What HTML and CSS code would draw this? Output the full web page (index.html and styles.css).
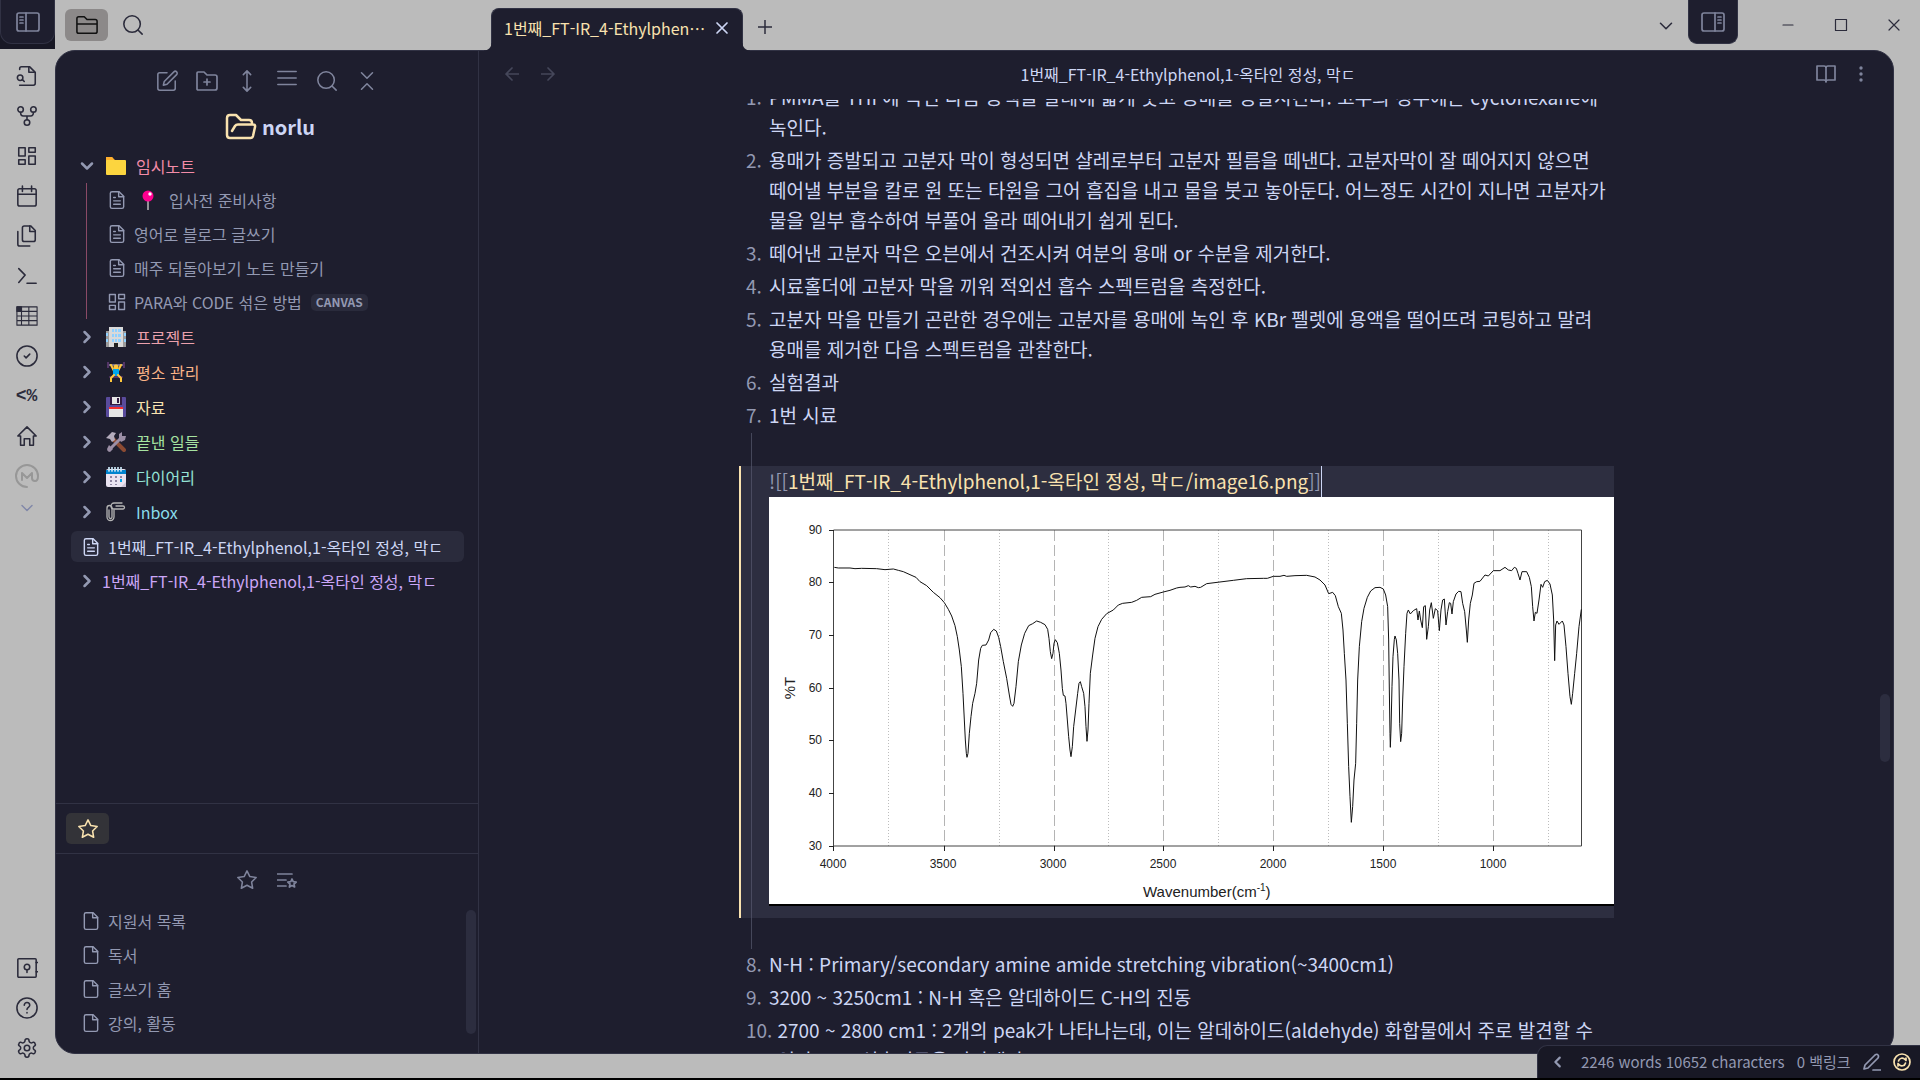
FILE: index.html
```html
<!DOCTYPE html>
<html lang="ko">
<head>
<meta charset="utf-8">
<title>1번째_FT-IR_4-Ethylphenol,1-옥타인 정성, 막ㄷ</title>
<link rel="stylesheet" href="styles.css">
</head>
<body>
<svg class="defs" width="0" height="0" aria-hidden="true">
  <symbol id="search" viewBox="0 0 24 24"><circle cx="11" cy="11" r="9"/><path d="M22 22l-4.300-4.300"/></symbol>
  <symbol id="chev-down" viewBox="0 0 24 24"><path d="M6 9l6 6 6-6"/></symbol>
  <symbol id="chev-right" viewBox="0 0 24 24"><path d="M9 6l6 6-6 6"/></symbol>
  <symbol id="file" viewBox="0 0 24 24"><path d="M14.500 2H6a2 2 0 0 0-2 2v16a2 2 0 0 0 2 2h12a2 2 0 0 0 2-2V7.500z"/><path d="M14 2v6h6"/></symbol>
  <symbol id="file-text" viewBox="0 0 24 24"><path d="M14.500 2H6a2 2 0 0 0-2 2v16a2 2 0 0 0 2 2h12a2 2 0 0 0 2-2V7.500z"/><path d="M14 2v6h6M16 13H8M16 17H8M10 9H8"/></symbol>
  <symbol id="dash" viewBox="0 0 24 24"><path d="M3 3h7v9H3zM14 3h7v5h-7zM14 12h7v9h-7zM3 16h7v5H3z"/></symbol>
  <symbol id="star" viewBox="0 0 24 24"><path d="M12 2l3.090 6.260L22 9.270l-5 4.870 1.180 6.880L12 17.770l-6.180 3.250L7 14.140 2 9.270l6.910-1.010z"/></symbol>
</svg>

<div class="app">
  <nav class="ribbon" aria-label="리본">
    <div class="ribbon-head"><button class="side-toggle" aria-label="사이드바 접기"><svg class="i24" viewBox="0 0 24 24"><rect x="1" y="3" width="22" height="18" rx="2"/><path d="M10 3v18M4 7h3M4 10h3M4 13h3"/></svg></button></div>
    <div class="ribbon-list">
      <button aria-label="빠른 전환"><svg class="i22" viewBox="0 0 24 24"><path d="M4 5V4a2 2 0 0 1 2-2h9l6 6v12a2 2 0 0 1-2 2H4"/><path d="M14 2v6h6"/><circle cx="4.500" cy="14" r="3"/><path d="M9 18l-2-2"/></svg></button>
      <button aria-label="그래프 뷰"><svg class="i22" viewBox="0 0 24 24"><circle cx="12" cy="19" r="3"/><circle cx="5" cy="5" r="3"/><circle cx="19" cy="5" r="3"/><path d="M19 8c0 3-1 4-3 4H8c-2 0-3-1-3-4M12 12v4"/></svg></button>
      <button aria-label="캔버스"><svg class="i22"><use href="#dash"/></svg></button>
      <button aria-label="데일리 노트"><svg class="i22" viewBox="0 0 24 24"><rect x="2" y="4" width="20" height="19" rx="2"/><path d="M7 1v6M17 1v6M2 10h20"/></svg></button>
      <button aria-label="템플릿"><svg class="i22" viewBox="0 0 24 24"><path d="M16 1H9a2 2 0 0 0-2 2v13a2 2 0 0 0 2 2h10a2 2 0 0 0 2-2V6z"/><path d="M15 1v6h6M2 7v14a2 2 0 0 0 2 2h11"/></svg></button>
      <button aria-label="명령어"><svg class="i22" viewBox="0 0 24 24"><path d="M3 4l7 7-7 8M12 20h10"/></svg></button>
      <button aria-label="표"><svg class="i22 thin" viewBox="0 0 24 24"><path d="M1 2h22v20H1zM1 7h22M1 12h22M1 17h22M6 2v20M14 2v20"/><path d="M1 2h5v5H1z" fill="currentColor"/></svg></button>
      <button aria-label="할 일"><svg class="i22" viewBox="0 0 24 24"><circle cx="12" cy="12" r="11"/><path d="M9 12l2 2 4-4"/></svg></button>
      <button class="code" aria-label="템플레이터">&lt;%</button>
      <button aria-label="홈"><svg class="i22" viewBox="0 0 24 24"><path d="M2 12L12 2l10 10h-3v10h-4v-7H9v7H5V12z"/></svg></button>
      <button class="faint" aria-label="메모"><svg class="i24" viewBox="0 0 24 24"><path d="M12 23A11 11 0 1 1 23 12c0 3-1 5-3 5s-3-1-3-3V9l-5 5-5-5v7"/></svg></button>
      <button class="more" aria-label="더 보기"><svg class="i20"><use href="#chev-down"/></svg></button>
    </div>
    <div class="ribbon-foot">
      <button aria-label="보관함"><svg class="i22" viewBox="0 0 24 24"><rect x="2" y="2" width="20" height="20" rx="1"/><circle cx="12" cy="11" r="3"/><path d="M12 14v3M22 6h2M22 16h2"/></svg></button>
      <button aria-label="도움말"><svg class="i22" viewBox="0 0 24 24"><circle cx="12" cy="12" r="11"/><path d="M9 9a3 3 0 0 1 6 0c0 2-3 2.500-3 4.500M12 17v.5"/></svg></button>
      <button aria-label="설정"><svg class="i22" viewBox="0 0 24 24"><path d="M12.200 2h-.4a2 2 0 0 0-2 2v.2a2 2 0 0 1-1 1.700l-.5.300a2 2 0 0 1-2 0l-.1-.1a2 2 0 0 0-2.800.7l-.2.400a2 2 0 0 0 .7 2.700l.2.100a2 2 0 0 1 1 1.700v.6a2 2 0 0 1-1 1.700l-.2.100a2 2 0 0 0-.7 2.700l.2.400a2 2 0 0 0 2.800.7l.1-.1a2 2 0 0 1 2 0l.5.300a2 2 0 0 1 1 1.700v.2a2 2 0 0 0 2 2h.4a2 2 0 0 0 2-2v-.2a2 2 0 0 1 1-1.700l.5-.3a2 2 0 0 1 2 0l.1.100a2 2 0 0 0 2.800-.7l.2-.4a2 2 0 0 0-.7-2.700l-.2-.1a2 2 0 0 1-1-1.700v-.6a2 2 0 0 1 1-1.700l.2-.1a2 2 0 0 0 .7-2.700l-.2-.4a2 2 0 0 0-2.800-.7l-.1.100a2 2 0 0 1-2 0l-.5-.3a2 2 0 0 1-1-1.700V4a2 2 0 0 0-2-2z"/><circle cx="12" cy="12" r="3"/></svg></button>
    </div>
  </nav>

  <div class="main">
    <header class="titlebar">
      <div class="side-tabs">
        <button class="pane-tab active" aria-label="파일 탐색기"><svg class="i22" viewBox="0 0 24 24"><path d="M3 3h6l3 3h9a2 2 0 0 1 2 2v11a2 2 0 0 1-2 2H3a2 2 0 0 1-2-2V5a2 2 0 0 1 2-2zM1 11h22"/></svg></button>
        <button class="pane-tab" aria-label="검색"><svg class="i22"><use href="#search"/></svg></button>
      </div>
      <div class="doc-tab"><span>1번째_FT-IR_4-Ethylphen⋯</span><button aria-label="탭 닫기"><svg class="i14" viewBox="0 0 14 14"><path d="M2 2l10 10M12 2L2 12"/></svg></button></div>
      <button class="new-tab" aria-label="새 탭"><svg class="i16" viewBox="0 0 16 16"><path d="M8 0v16M0 8h16"/></svg></button>
      <button class="tab-list" aria-label="탭 목록"><svg class="i22"><use href="#chev-down"/></svg></button>
      <button class="right-toggle" aria-label="오른쪽 사이드바"><svg class="i24" viewBox="0 0 24 24"><rect x="1" y="3" width="22" height="18" rx="2"/><path d="M14 3v18M17 7h3M17 10h3M17 13h3"/></svg></button>
      <div class="win-buttons">
        <button aria-label="최소화"><svg class="i14" viewBox="0 0 14 14"><path d="M2 7h10"/></svg></button>
        <button aria-label="최대화"><svg class="i14" viewBox="0 0 14 14"><path d="M1.500 1.500h11v11h-11z"/></svg></button>
        <button aria-label="닫기"><svg class="i14" viewBox="0 0 14 14"><path d="M2 2l10 10M12 2L2 12"/></svg></button>
      </div>
    </header>

    <div class="workspace">
      <aside class="sidebar">
        <div class="toolbar">
          <button aria-label="새 노트"><svg class="i22" viewBox="0 0 24 24"><path d="M12 3H4a2 2 0 0 0-2 2v15a2 2 0 0 0 2 2h15a2 2 0 0 0 2-2v-8"/><path d="M19.500 2a2 2 0 0 1 3 3L12 15.500l-4 1 1-4z"/></svg></button>
          <button aria-label="새 폴더"><svg class="i24" viewBox="0 0 24 24"><path d="M3 3h6l3 3h8a2 2 0 0 1 2 2v11a2 2 0 0 1-2 2H3a1 1 0 0 1-1-1V4a1 1 0 0 1 1-1zM12 10v6M9 13h6"/></svg></button>
          <button aria-label="정렬"><svg class="i22" viewBox="0 0 24 24"><path d="M12 1v22M8 5l4-4 4 4M8 19l4 4 4-4"/></svg></button>
          <button class="raised" aria-label="목록"><svg class="i22" viewBox="0 0 24 24"><path d="M2 5h20M2 12h20M2 19h20"/></svg></button>
          <button aria-label="검색"><svg class="i22"><use href="#search"/></svg></button>
          <button aria-label="모두 접기"><svg class="i22" viewBox="0 0 24 24"><path d="M6 3l6 6 6-6M6 21l6-6 6 6"/></svg></button>
        </div>
        <div class="vault"><svg viewBox="0 0 32 28"><path d="M7 18l3-5q1-1.500 3-1.500h15q2.500 0 2 2.500l-2 9q-.5 2-2.500 2H5q-3 0-3-3V5q0-3 3-3h6l5 5h8q3 0 3 3v1.500"/></svg><h1>norlu</h1></div>

        <ul class="tree">
          <li><a class="row folder" href="#"><svg class="chev"><use href="#chev-down"/></svg><svg class="emoji" viewBox="0 0 20 20"><path d="M0 1h6l3 3h9v6H0z" fill="#ffb02e"/><rect y="4" width="20" height="15" rx="1" fill="#fcd53f"/><path d="M0 1h6l2 3H0z" fill="#ffb02e"/></svg><span class="c-red">임시노트</span></a>
            <ul class="children">
              <li><a class="row" href="#"><svg class="fi"><use href="#file-text"/></svg><svg class="emoji pin" viewBox="0 0 20 20"><path d="M10 9v11" stroke="#bbb" stroke-width="1.500"/><circle cx="10" cy="6" r="5.500" fill="#ff0090"/><circle cx="12" cy="4" r="1.700" fill="#fff"/></svg><span>입사전 준비사항</span></a></li>
              <li><a class="row" href="#"><svg class="fi"><use href="#file-text"/></svg><span>영어로 블로그 글쓰기</span></a></li>
              <li><a class="row" href="#"><svg class="fi"><use href="#file-text"/></svg><span>매주 되돌아보기 노트 만들기</span></a></li>
              <li><a class="row" href="#"><svg class="fi"><use href="#dash"/></svg><span>PARA와 CODE 섞은 방법</span><b class="tag">CANVAS</b></a></li>
            </ul>
          </li>
          <li><a class="row folder" href="#"><svg class="chev"><use href="#chev-right"/></svg><svg class="emoji" viewBox="0 0 20 20"><path d="M0 4h20v16H0z" fill="#9b9b9b"/><path d="M3 0h14v20H3z" fill="#d9d9d9"/><path d="M6 2h2v3H6zM9 2h2v3H9zM12 2h3v3h-3zM6 7h2v3H6zM9 7h2v3H9zM12 7h3v3h-3zM6 12h2v3H6zM9 12h2v3H9zM12 12h3v3h-3zM0 6h2v3H0zM18 6h2v3h-2zM0 12h2v3H0zM18 12h2v3h-2z" fill="#8fd0ff"/><path d="M8 16h4v4H8z" fill="#222"/></svg><span class="c-maroon">프로젝트</span></a></li>
          <li><a class="row folder" href="#"><svg class="chev"><use href="#chev-right"/></svg><svg class="emoji" viewBox="0 0 20 20"><path d="M2 3h16" stroke="#998ea4"/><path d="M1 0h2v6H1zM17 0h2v6h-2z" fill="#533566"/><path d="M5 3l3 6M15 3l-3 6" stroke="#ffc83d" stroke-width="2"/><circle cx="10" cy="5" r="2.500" fill="#ffc83d"/><path d="M7 7h6v7H7z" fill="#00a6ed"/><path d="M4 15h12" stroke="#533566" stroke-width="2"/><path d="M8 13l-3 3v4M12 13l3 3v4" stroke="#ffc83d" stroke-width="2" fill="none"/></svg><span class="c-peach">평소 관리</span></a></li>
          <li><a class="row folder" href="#"><svg class="chev"><use href="#chev-right"/></svg><svg class="emoji" viewBox="0 0 20 20"><rect width="20" height="20" rx="1" fill="#594b9c"/><path d="M4 0h12v8H4z" fill="#321b41"/><path d="M6 0h8v7H6z" fill="#e6e6e6"/><path d="M11 1h2v5h-2z" fill="#321b41"/><path d="M3 10h14v10H3z" fill="#e6e6e6"/><path d="M3 10h14v2H3z" fill="#f8312f"/></svg><span class="c-yellow">자료</span></a></li>
          <li><a class="row folder" href="#"><svg class="chev"><use href="#chev-right"/></svg><svg class="emoji" viewBox="0 0 20 20"><path d="M7 7l11 11" stroke="#8a4a32" stroke-width="4"/><path d="M3 18L15 6" stroke="#9b8ea5" stroke-width="3"/><path d="M13 7V2l3-2v4h4l-1 4-4 2zM1 17l2-4 4 4-3 3-2-1z" fill="#9b8ea5"/><path d="M0 6l6-6 4 1-2 3 1 4-3 2-2-3z" fill="#b4acbc"/></svg><span class="c-green">끝낸 일들</span></a></li>
          <li><a class="row folder" href="#"><svg class="chev"><use href="#chev-right"/></svg><svg class="emoji" viewBox="0 0 20 20"><rect y="2" width="20" height="18" rx="2" fill="#e9e3f0"/><path d="M0 3h20v4H0z" fill="#0084ce"/><path d="M3 0v4M6 0v4M9 0v4M12 0v4M15 0v4" stroke="#c8e4f5"/><path d="M4 9h2v2H4zM9 9h2v2H9zM14 9h2v2h-2zM4 13h2v2H4zM9 13h2v2H9zM4 17h2v1H4zM9 17h2v1H9z" fill="#8d84a0"/><path d="M14 12h2v3h-2z" fill="#00a6ed"/><path d="M20 15v5h-5z" fill="#cdc4d6"/></svg><span class="c-teal">다이어리</span></a></li>
          <li><a class="row folder" href="#"><svg class="chev"><use href="#chev-right"/></svg><svg class="emoji" viewBox="0 0 20 20"><g fill="none" stroke="#b5b5b5" stroke-width="1.300"><path d="M3 8v7a1.500 1.500 0 0 0 3 0V6a2 2 0 0 0-5 0v9a3.500 3.500 0 0 0 7 0V8"/><path d="M10 4h7a1.500 1.500 0 0 1 0 3H8a2.500 2.500 0 0 1 0-6h8"/></g></svg><span class="c-sky">Inbox</span></a></li>
          <li><a class="row top current" href="#"><svg class="fi"><use href="#file-text"/></svg><span>1번째_FT-IR_4-Ethylphenol,1-옥타인 정성, 막ㄷ</span></a></li>
          <li><a class="row folder bare" href="#"><svg class="chev"><use href="#chev-right"/></svg><span class="c-mauve">1번째_FT-IR_4-Ethylphenol,1-옥타인 정성, 막ㄷ</span></a></li>
        </ul>

        <section class="starred">
          <div class="starred-tabs"><button aria-label="별표"><svg class="i22"><use href="#star"/></svg></button></div>
          <div class="toolbar small">
            <button aria-label="별표 추가"><svg class="i22"><use href="#star"/></svg></button>
            <button aria-label="별표 그룹"><svg class="i20" viewBox="0 0 20 20"><path d="M0 4h15M0 10h9M0 16h9"/><path d="M15 9l1.200 2.700 3 .3-2.200 2 .6 3-2.600-1.500-2.600 1.500.6-3-2.200-2 3-.3z"/></svg></button>
          </div>
          <ul class="starred-list">
            <li><a class="row" href="#"><svg class="fi"><use href="#file"/></svg><span>지원서 목록</span></a></li>
            <li><a class="row" href="#"><svg class="fi"><use href="#file"/></svg><span>독서</span></a></li>
            <li><a class="row" href="#"><svg class="fi"><use href="#file"/></svg><span>글쓰기 홈</span></a></li>
            <li><a class="row" href="#"><svg class="fi"><use href="#file"/></svg><span>강의, 활동</span></a></li>
          </ul>
          <div class="thumb"></div>
        </section>
      </aside>

      <main class="editor">
        <div class="view-header">
          <div class="nav"><button aria-label="뒤로"><svg class="i14" viewBox="0 0 14 14"><path d="M14 7H1M7 1L1 7l6 6"/></svg></button><button aria-label="앞으로"><svg class="i14" viewBox="0 0 14 14"><path d="M0 7h13M7 1l6 6-6 6"/></svg></button></div>
          <h2>1번째_FT-IR_4-Ethylphenol,1-옥타인 정성, 막ㄷ</h2>
          <div class="actions"><button aria-label="읽기 모드"><svg class="i20" viewBox="0 0 20 20"><path d="M10 4q0-2-2-2H1v14h7q2 0 2 2 0-2 2-2h7V2h-7q-2 0-2 2v14"/></svg></button><button aria-label="더 보기"><svg class="i20" viewBox="0 0 20 20"><g fill="currentColor" stroke="none"><circle cx="10" cy="4" r="1.700"/><circle cx="10" cy="10" r="1.700"/><circle cx="10" cy="16" r="1.700"/></g></svg></button></div>
        </div>
        <div class="scroller">
          <article class="note">
            <ol>
              <li><span class="n">1.</span><p>PMMA를 THF에 녹인 다음 용액을 샬레에 얇게 붓고 용매를 증발시킨다. 고무의 경우에는 cyclohexane에<br>녹인다.</p></li>
              <li><span class="n">2.</span><p>용매가 증발되고 고분자 막이 형성되면 샬레로부터 고분자 필름을 떼낸다. 고분자막이 잘 떼어지지 않으면<br>떼어낼 부분을 칼로 원 또는 타원을 그어 흠집을 내고 물을 붓고 놓아둔다. 어느정도 시간이 지나면 고분자가<br>물을 일부 흡수하여 부풀어 올라 떼어내기 쉽게 된다.</p></li>
              <li><span class="n">3.</span><p>떼어낸 고분자 막은 오븐에서 건조시켜 여분의 용매 or 수분을 제거한다.</p></li>
              <li><span class="n">4.</span><p>시료홀더에 고분자 막을 끼워 적외선 흡수 스펙트럼을 측정한다.</p></li>
              <li><span class="n">5.</span><p>고분자 막을 만들기 곤란한 경우에는 고분자를 용매에 녹인 후 KBr 펠렛에 용액을 떨어뜨려 코팅하고 말려<br>용매를 제거한 다음 스펙트럼을 관찰한다.</p></li>
              <li><span class="n">6.</span><p>실험결과</p></li>
              <li><span class="n">7.</span><p>1번 시료</p></li>
            </ol>
            <div class="indent">
              <div class="embed">
                <p class="link"><i>![[</i>1번째_FT-IR_4-Ethylphenol,1-옥타인 정성, 막ㄷ/image16.png<i>]]</i><span class="caret"></span></p>
                <svg class="chart" viewBox="0 0 845 409" role="img" aria-label="FT-IR 스펙트럼">
                  <rect width="845" height="407" fill="#fff" stroke="none"/><rect y="407" width="845" height="2" fill="#000" stroke="none"/>
                  <g stroke="#b4b4b4" stroke-dasharray="11 4"><path d="M175.500 33v316M285.500 33v316M394.500 33v316M504.500 33v316M614.500 33v316M724.500 33v316"/></g>
                  <g stroke="#bdbdbd" stroke-dasharray="1 2"><path d="M119.500 33v316M230.500 33v316M339.500 33v316M449.500 33v316M559.500 33v316M669.500 33v316M779.500 33v316"/></g>
                  <path d="M64.500 33v316h748V33z" fill="none" stroke="#444"/>
                  <path d="M60 33.500h5M60 85.500h5M60 138.500h5M60 191.500h5M60 243.500h5M60 296.500h5M60 349.500h5M64.500 349v5M175.500 349v5M285.500 349v5M394.500 349v5M504.500 349v5M614.500 349v5M724.500 349v5" stroke="#222"/>
                  <g class="curve">
                    <polyline transform="translate(-39 -77) scale(.33333)" points="313,442 325,444 360,444 375,446 395,445 440,446 465,449 490,447 505,451 520,455 540,464 558,472 570,485 590,497 610,517 630,533 643,548 655,568 665,588 675,617 682,650 688,690 694,740 699,820 703,900 706,960 709,1000 711,1012 714,1000 718,940 723,890 728,850 735,820 740,790 746,720 752,685 757,676 768,675 776,660 782,638 791,628 799,633 806,652 812,680 820,725 830,775 838,825 843,853 848,859 852,850 858,800 865,725 874,675 884,640 896,617 908,611 920,603 932,607 945,614 953,628 957,655 961,695 965,716 969,700 972,670 976,659 982,668 988,700 993,750 997,805 1000,826 1005,828 1008,850 1012,900 1016,950 1020,990 1023,1010 1027,980 1031,920 1037,870 1043,820 1047,790 1051,785 1055,800 1061,820 1065,860 1068,920 1071,964 1074,930 1077,850 1081,760 1088,705 1095,655 1104,620 1115,598 1130,581 1150,570 1165,555 1178,550 1205,547 1220,541 1235,532 1262,530 1275,523 1300,516 1320,511 1340,504 1350,502"/>
                    <polyline transform="translate(411 -57) scale(.33333)" points="0,442 15,441 25,437 32,441 45,439 55,443 62,442 80,431 120,426 160,421 200,416 250,415 262,415 280,409 300,409 312,406 320,409 345,407 380,406 405,411 420,420 435,435 446,461 458,457 466,467 475,500 484,520 489,570 493,640 498,720 502,850 506,980 510,1070 514,1147 518,1100 522,1020 527,970 530,850 533,720 538,620 545,545 552,505 562,472 572,453 585,443 600,442 610,447 617,465 623,500 626,600 628,750 630,880 631,922 633,870 636,740 639,650 643,598 645,588 649,600 653,640 657,720 659,850 662,905 665,880 668,780 672,680 677,580 681,520 685,510 691,522 700,512 710,506 714,540 718,513 722,540 727,563 731,500 736,497 740,598 745,560 749,510 754,488 760,535 766,506 773,512 778,572 783,510 788,480 793,477 798,555 803,515 808,488 812,490 816,522 820,485 828,462 836,454 843,455 848,490 854,515 859,570 862,607 866,540 871,490 877,465 882,430 890,425 900,424 915,405 925,408 940,392 960,392 975,382 985,390 995,392 1003,382 1009,385 1014,400 1020,420 1026,395 1040,395 1048,412 1054,440 1058,500 1062,543 1066,517 1071,520 1077,480 1083,433 1088,442 1094,425 1102,421 1110,432 1117,465 1121,540 1124,662 1127,555 1131,543 1137,553 1147,543 1152,555 1158,620 1164,700 1170,770 1174,793 1178,760 1184,700 1190,640 1197,560 1204,508"/>
                  </g>
                  <g class="ticks" text-anchor="end"><text x="53" y="37">90</text><text x="53" y="89">80</text><text x="53" y="142">70</text><text x="53" y="195">60</text><text x="53" y="247">50</text><text x="53" y="300">40</text><text x="53" y="353">30</text></g>
                  <g class="ticks" text-anchor="middle"><text x="64" y="371">4000</text><text x="174" y="371">3500</text><text x="284" y="371">3000</text><text x="394" y="371">2500</text><text x="504" y="371">2000</text><text x="614" y="371">1500</text><text x="724" y="371">1000</text></g>
                  <text class="axis" x="374" y="400">Wavenumber(cm<tspan class="sup" dy="-6">-1</tspan><tspan dy="6">)</tspan></text>
                  <text class="axis" transform="translate(26 191) rotate(-90)" text-anchor="middle">%T</text>
                </svg>
              </div>
            </div>
            <ol>
              <li><span class="n">8.</span><p>N-H : Primary/secondary amine amide stretching vibration(~3400cm1)</p></li>
              <li><span class="n">9.</span><p>3200 ~ 3250cm1 : N-H 혹은 알데하이드 C-H의 진동</p></li>
              <li><span class="n">10.</span><p>2700 ~ 2800 cm1 : 2개의 peak가 나타나는데, 이는 알데하이드(aldehyde) 화합물에서 주로 발견할 수<br>있다. C-H 신축진동을 나타낸다.</p></li>
            </ol>
          </article>
          <div class="thumb"></div>
        </div>
      </main>
    </div>
  </div>

  <footer class="status">
    <button class="collapse" aria-label="접기"><svg class="i16 bold" viewBox="0 0 16 16"><path d="M10 3L5 8l5 5"/></svg></button>
    <span>2246 words 10652 characters</span><span>0 백링크</span>
    <button aria-label="편집 모드"><svg class="i18" viewBox="0 0 18 18"><path d="M12 2q2-1.500 3 0 1 1 0 3L5 15l-4 1 1-4zM10 17h8"/></svg></button>
    <button class="sync" aria-label="동기화"><svg class="i18" viewBox="0 0 18 18"><circle cx="9" cy="9" r="8"/><path d="M5.500 8a3.700 3.700 0 0 1 6.500-1.500l1 1V5M12.500 10A3.700 3.700 0 0 1 6 11.500l-1-1V13"/></svg></button>
  </footer>
</div>
</body>
</html>
```
FILE: styles.css
```css
:root {
  --base: #1e1e2e;
  --mantle: #181825;
  --line: #313244;
  --text: #cdd6f4;
  --muted: #7f849c;
  --soft: #9399b2;
  --yellow: #f9e2af;
  --chrome: #bbbbbb;
  --ink: #2b2b3b;
}
* { box-sizing: border-box; }
body {
  margin: 0;
  background: var(--chrome);
  color: var(--text);
  font: 16px/24px "Noto Sans CJK KR", sans-serif;
}
ul, ol, p, h1, h2 { margin: 0; padding: 0; list-style: none; font-size: inherit; font-weight: inherit; }
a { color: inherit; text-decoration: none; }
button {
  display: flex; align-items: center; justify-content: center;
  padding: 0; border: 0; background: none; color: inherit; font: inherit;
}
svg { fill: none; stroke: currentColor; stroke-width: 1.700; stroke-linecap: round; stroke-linejoin: round; flex: none; }
.defs { position: absolute; }
.i14 { width: 14px; height: 14px; }
.i16 { width: 14px; height: 14px; }
.i18 { width: 18px; height: 18px; }
.i20 { width: 20px; height: 20px; }
.i22 { width: 22px; height: 22px; }
.i24 { width: 24px; height: 24px; }
.bold { stroke-width: 2.500; }
.thin { stroke-width: 1.200; }

.app { display: flex; height: 100vh; position: relative; border-bottom: 2px solid #000; overflow: hidden; }

/* ribbon */
.ribbon { width: 55px; flex: none; display: flex; flex-direction: column; color: var(--ink); padding-bottom: 10px; }
.ribbon-head { height: 49px; background: var(--mantle); margin-bottom: 7px; }
.side-toggle { width: 55px; height: 44px; background: var(--base); border: 1px solid var(--line); border-top: 0; border-radius: 0 0 12px 12px; color: var(--muted); }
.ribbon-list, .ribbon-foot { display: flex; flex-direction: column; padding-right: 2px; }
.ribbon-list { flex: 1; }
.ribbon-list button, .ribbon-foot button { height: 40px; }
.ribbon .code { font: 700 18px/20px "Liberation Mono", monospace; }
.ribbon .faint { color: #979797; }
.ribbon .faint svg { stroke-width: 2; }
.ribbon .more { height: 24px; color: #8087a8; }

/* title bar */
.main { flex: 1; min-width: 0; display: flex; flex-direction: column; }
.titlebar { height: 50px; flex: none; display: flex; color: var(--ink); }
.side-tabs { width: 436px; padding: 9px 10px; display: flex; gap: 3px; }
.pane-tab { width: 43px; height: 32px; border-radius: 6px; }
.pane-tab.active { background: #8c8989; color: #111; }
.doc-tab {
  width: 252px; margin-top: 8px; height: 43px; padding: 0 13px 4px 12px; position: relative; z-index: 1;
  display: flex; align-items: center; justify-content: space-between; white-space: nowrap;
  background: var(--base); border: 1px solid var(--line); border-bottom: 0; border-radius: 8px 8px 0 0; color: var(--yellow);
}
.doc-tab::before, .doc-tab::after { content: ""; position: absolute; bottom: 0; width: 8px; height: 8px; }
.doc-tab::before { left: -8px; background: radial-gradient(circle at 0 0, transparent 7px, var(--base) 8px); }
.doc-tab::after { right: -8px; background: radial-gradient(circle at 100% 0, transparent 7px, var(--base) 8px); }
.doc-tab button { color: var(--text); }
.new-tab { width: 44px; height: 53px; }
.tab-list { margin-left: auto; width: 44px; height: 52px; }
.right-toggle { width: 50px; height: 44px; background: var(--base); border: 1px solid var(--line); border-top: 0; border-radius: 0 0 9px 9px; color: var(--muted); }
.win-buttons { display: flex; height: 49px; padding-left: 23px; }
.win-buttons button { width: 53px; }
.win-buttons svg { stroke-width: 1.200; }

/* workspace */
.workspace {
  flex: 1; min-height: 0; display: flex; margin: 0 26px 24px 0;
  background: var(--base); border: 1px solid var(--line); border-radius: 20px; overflow: hidden;
}
.sidebar { width: 423px; flex: none; border-right: 1px solid var(--line); display: flex; flex-direction: column; color: var(--soft); }
.toolbar { display: flex; justify-content: center; padding-top: 10px; color: var(--muted); }
.toolbar button { width: 40px; height: 40px; }
.toolbar .raised { padding-bottom: 7px; }
.vault { display: flex; justify-content: center; align-items: center; gap: 5px; height: 47px; padding: 4px 0 0 6px; color: var(--yellow); }
.vault svg { width: 32px; height: 28px; stroke-width: 2.500; }
.vault h1 { color: var(--text); font-weight: 700; font-size: 20px; }
.row { display: flex; align-items: center; height: 34px; white-space: nowrap; }
.tree { flex: 1; padding: 0 14px 0 15px; }
.row.folder { height: 35px; padding-left: 6px; }
.chev { width: 20px; height: 20px; stroke-width: 3; color: var(--soft); }
.emoji { width: 20px; height: 20px; stroke: none; margin: 0 10px 0 9px; }
.fi { width: 20px; height: 20px; margin-right: 7px; }
.children { margin-left: 15px; border-left: 1px solid #8a4a66; padding-left: 20px; }
.pin { margin: 0 11px 0 4px; }
.tag { margin-left: 9px; padding: 0 5px; height: 17px; border-radius: 5px; background: #2a2b3c; font: 700 12px/16px "Noto Sans CJK KR", sans-serif; }
.row.top { padding-left: 10px; }
.current { height: 31px; margin: 2px 0 1px; background: #2a2b3c; border-radius: 6px; color: var(--text); }
.bare { gap: 5px; }
.c-red { color: #f38ba8; }
.c-maroon { color: #eba0ac; }
.c-peach { color: #fab387; }
.c-yellow { color: #f9e2af; }
.c-green { color: #a6e3a1; }
.c-teal { color: #94e2d5; }
.c-sky { color: #89dceb; }
.c-mauve { color: #cba6f7; }

.starred { position: relative; height: 250px; border-top: 1px solid var(--line); }
.starred-tabs { height: 50px; padding: 9px 10px; border-bottom: 1px solid var(--line); }
.starred-tabs button { width: 43px; height: 31px; border-radius: 5px; background: #333338; color: var(--yellow); }
.toolbar.small { padding-top: 6px; }
.starred-list { padding: 4px 25px 0; }
.thumb { position: absolute; background: #2c2d3f; border-radius: 5px; width: 10px; }
.starred .thumb { right: 2px; top: 106px; height: 124px; }

/* editor */
.editor { flex: 1; min-width: 0; display: flex; flex-direction: column; }
.view-header { height: 48px; flex: none; display: flex; align-items: center; padding: 0 22px 3px 26px; }
.nav, .actions { flex: 1; display: flex; gap: 22px; color: #45475a; }
.actions { justify-content: flex-end; gap: 15px; color: var(--muted); }
.scroller { flex: 1; min-height: 0; overflow: hidden; position: relative; }
.scroller .thumb { right: 3px; top: 595px; height: 68px; }
.note { width: 880px; margin: -17px auto 0; padding-right: 12px; font-size: 19px; line-height: 30px; white-space: nowrap; }
.note li { display: flex; gap: 5px; margin-bottom: 3px; }
.n { color: var(--soft); min-width: 18px; }
.indent { margin-left: 5px; padding: 33px 0 31px; position: relative; border-left: 1px solid #45475a; }
.embed { margin-left: -13px; padding: 0 0 12px 28px; border-left: 2px solid var(--yellow); background: linear-gradient(90deg, transparent 10px, #4a4b60 10px, #4a4b60 11px, transparent 11px) #2d2e40; }
.link { height: 31px; display: flex; color: var(--yellow); }
.link i { font-style: normal; color: var(--soft); }
.caret { width: 1px; background: var(--text); }
.chart { display: block; width: 100%; stroke-linecap: butt; stroke-width: 1; }
.curve { stroke: #111; }
.curve polyline { vector-effect: non-scaling-stroke; }
.chart text { font-family: "Liberation Sans", Arial, sans-serif; fill: #222; stroke: none; }
.ticks { font-size: 12px; }
.chart .axis { font-size: 15px; }
.chart .sup { font-size: 10px; }

/* status bar */
.status {
  position: absolute; right: 0; bottom: 0; width: 383px; height: 33px; padding-left: 13px;
  display: flex; align-items: center; gap: 12px; white-space: nowrap;
  background: var(--mantle); border: 1px solid var(--line); border-width: 1px 0 0 1px; border-radius: 10px 0 0 0; color: var(--soft); font-size: 15px;
}
.collapse { margin-right: 4px; }
.sync { color: var(--yellow); }
```
